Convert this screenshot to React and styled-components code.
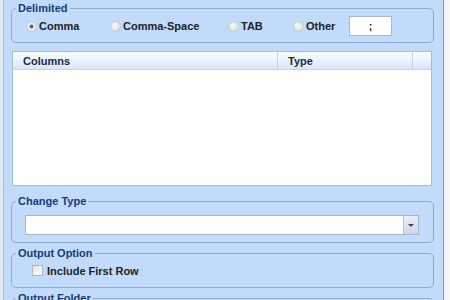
import styled, { createGlobalStyle } from 'styled-components'

const Global = createGlobalStyle`
  html, body {
    margin: 0;
    height: 300px;
    overflow: hidden;
    background: #c3dbfb;
  }
  body {
    font-family: "Liberation Sans", Arial, sans-serif;
    font-size: 11px;
    font-weight: bold;
    color: #1b1b1b;
  }
`

const App = () => {
  return (
    <>
      <Global />
      <Window>
        <LeftEdge />
        <Main>
          <Group>
            <Legend>Delimited</Legend>
            <GroupBody $pad="1px 0 6px 14px">
              <RadioRow>
                <RadioItem $w={84}>
                  <Radio $checked />
                  Comma
                </RadioItem>
                <RadioItem $w={118}>
                  <Radio />
                  Comma-Space
                </RadioItem>
                <RadioItem $w={65}>
                  <Radio />
                  TAB
                </RadioItem>
                <RadioItem $w={56}>
                  <Radio />
                  Other
                </RadioItem>
                <SepInput>;</SepInput>
              </RadioRow>
            </GroupBody>
          </Group>

          <ListView>
            <ListHeader>
              <HeaderCell $w={265}>Columns</HeaderCell>
              <HeaderCell $w={135}>Type</HeaderCell>
              <HeaderCell />
            </ListHeader>
          </ListView>

          <Group $top={9}>
            <Legend>Change Type</Legend>
            <GroupBody $pad="7px 14px 7px 13px">
              <Combo>
                <ComboField />
                <ComboButton>
                  <Arrow />
                </ComboButton>
              </Combo>
            </GroupBody>
          </Group>

          <Group $top={4}>
            <Legend>Output Option</Legend>
            <GroupBody $pad="4px 0 10px 20px">
              <CheckRow>
                <CheckBox />
                Include First Row
              </CheckRow>
            </GroupBody>
          </Group>

          <Group $top={4}>
            <Legend>Output Folder</Legend>
            <GroupBody $pad="8px 14px 10px 13px">
              <Combo>
                <ComboField />
              </Combo>
            </GroupBody>
          </Group>
        </Main>
        <RightEdge />
      </Window>
    </>
  )
}
export default App

const Window = styled.div`
  display: flex;
  height: 300px;
`
const LeftEdge = styled.div`
  width: 3px;
  background: #dfe8f2;
  border-right: 1px solid #a9bcd4;
`
const RightEdge = styled.div`
  width: 6px;
  background: #f4f6f8;
  border-left: 1px solid #8e959e;
`
const Main = styled.div`
  flex: 1;
  display: flex;
  flex-direction: column;
  padding: 2px 9px 0 7px;
  min-width: 0;
`
const Group = styled.fieldset`
  margin: ${(p) => p.$top || 0}px 0 0 0;
  padding: 0;
  border: 1px solid #8ea9cb;
  border-radius: 5px;
  min-width: 0;
  flex-shrink: 0;
`
const Legend = styled.legend`
  margin-left: 4px;
  padding: 0 2px;
  line-height: 13px;
  color: #163a78;
`
const GroupBody = styled.div`
  padding: ${(p) => p.$pad};
`
const RadioRow = styled.div`
  display: flex;
  align-items: center;
  height: 20px;
`
const RadioItem = styled.div`
  display: flex;
  align-items: center;
  gap: 2px;
  width: ${(p) => p.$w}px;
  color: #222;
`
const Radio = styled.span`
  width: 9px;
  height: 9px;
  border-radius: 50%;
  border: 1px solid #c4c9d0;
  background: ${(p) =>
    p.$checked
      ? 'radial-gradient(circle, #60666e 0 1.5px, #e3e6e9 2.3px, #f5f6f7 100%)'
      : 'radial-gradient(circle at 40% 40%, #f6f7f8, #d3d7dc)'};
`
const SepInput = styled.div`
  width: 41px;
  height: 18px;
  border: 1px solid #a9b7c8;
  background: #fff;
  display: flex;
  align-items: center;
  justify-content: center;
  color: #111;
`
const ListView = styled.div`
  margin: 8px 2px 0 1px;
  height: 133px;
  border: 1px solid #a7bcd8;
  background: #fff;
  flex-shrink: 0;
`
const ListHeader = styled.div`
  display: flex;
  height: 17px;
  background: linear-gradient(#fbfdff, #e9f1fb 55%, #d8e6f8);
  border-bottom: 1px solid #c3d3e8;
`
const HeaderCell = styled.div`
  flex: ${(p) => (p.$w ? `0 0 ${p.$w}px` : 1)};
  display: flex;
  align-items: center;
  padding-left: 10px;
  box-sizing: border-box;
  color: #1e2a3a;
  border-right: ${(p) => (p.$w ? '1px solid #c6d2e2' : 'none')};
`
const Combo = styled.div`
  display: flex;
  height: 18px;
  border: 1px solid #a8b6c8;
  background: #fff;
`
const ComboField = styled.div`
  flex: 1;
`
const ComboButton = styled.div`
  width: 14px;
  border-left: 1px solid #b9c6d6;
  background: linear-gradient(#e7eef7, #cdd9e8);
  display: flex;
  align-items: center;
  justify-content: center;
`
const Arrow = styled.span`
  width: 0;
  height: 0;
  border-left: 3px solid transparent;
  border-right: 3px solid transparent;
  border-top: 3px solid #3d4654;
`
const CheckRow = styled.div`
  display: flex;
  align-items: center;
  gap: 4px;
  height: 13px;
  color: #222;
`
const CheckBox = styled.span`
  width: 9px;
  height: 9px;
  border: 1px solid #b1b7bf;
  background: linear-gradient(135deg, #e3e6ea, #fbfbfc);
`
